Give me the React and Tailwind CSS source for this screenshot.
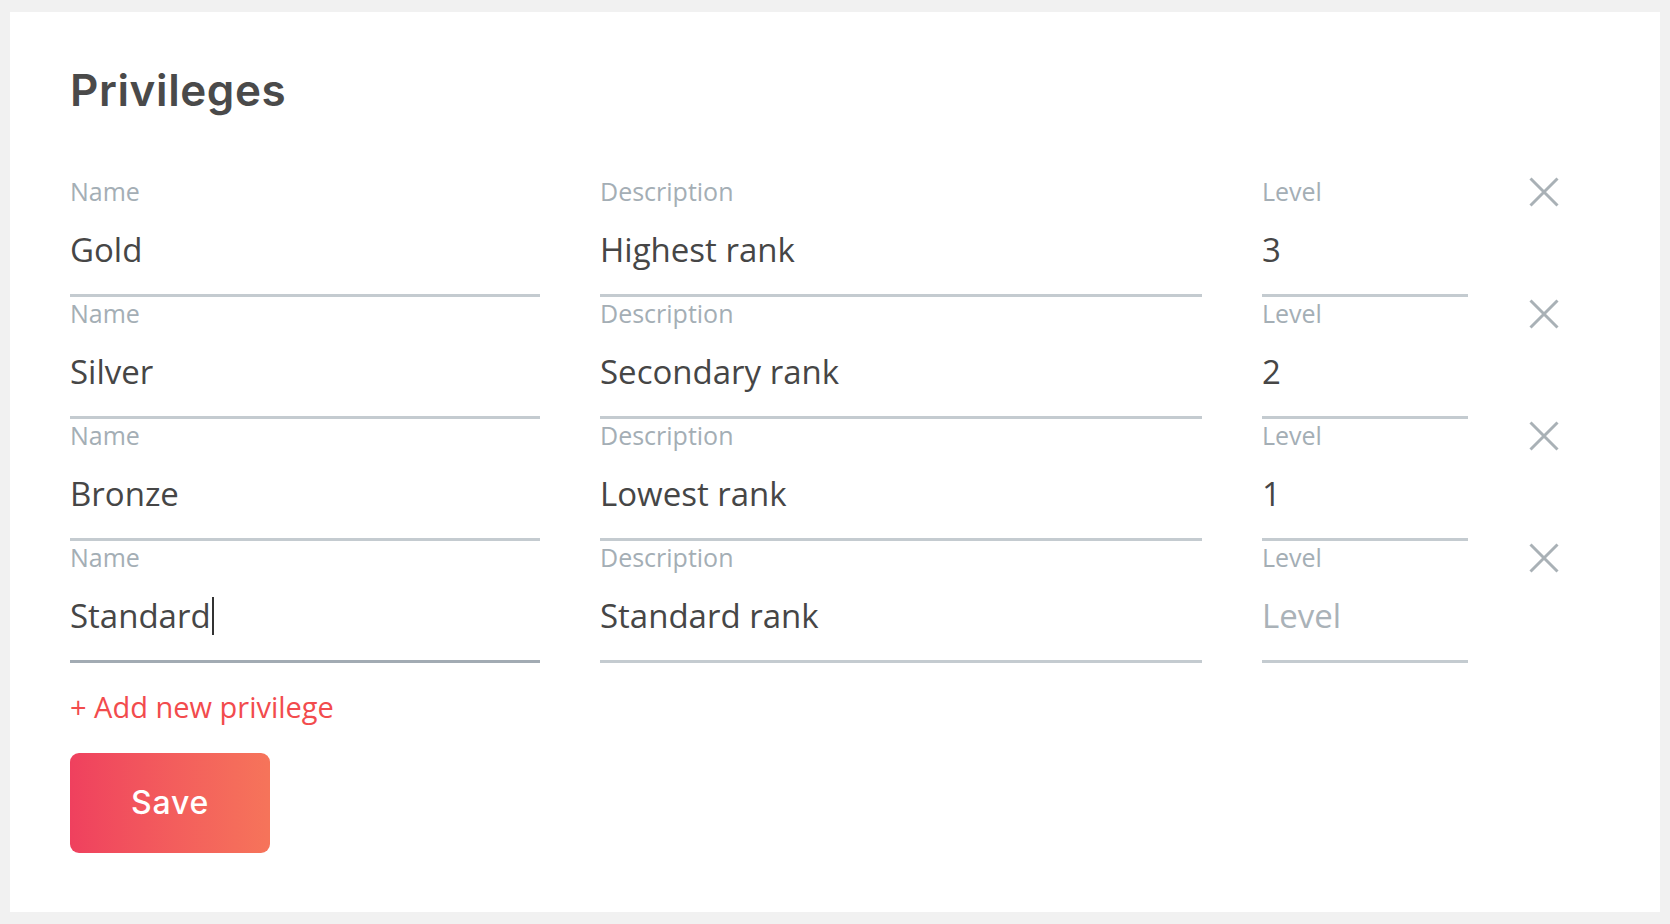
import React from "react";

const rows = [
  { name: "Gold", desc: "Highest rank", level: "3" },
  { name: "Silver", desc: "Secondary rank", level: "2" },
  { name: "Bronze", desc: "Lowest rank", level: "1" },
  { name: "Standard", desc: "Standard rank", level: "", focused: true },
];

function Field({ label, value, placeholder, width, focused, cursor }) {
  return (
    <div className="flex flex-col shrink-0" style={{ width }}>
      <div className="h-[32px] text-[25px] leading-[32px] text-[#a4aeb5]">{label}</div>
      <div className="mt-[23px] h-[40px] text-[33px] leading-[40px] font-medium text-[#464646] flex items-center whitespace-nowrap">
        {value ? (
          <span>{value}</span>
        ) : (
          <span className="text-[#aab2b8] font-normal">{placeholder}</span>
        )}
        {cursor && <span className="inline-block w-[2px] h-[38px] bg-[#333] ml-[1px]" />}
      </div>
      <div className={`mt-[24px] h-[3.5px] ${focused ? "bg-[#a2abb3]" : "bg-[#c4cbd0]"}`} />
    </div>
  );
}

function XIcon() {
  return (
    <svg width="30" height="30" viewBox="0 0 30 30" className="mt-[2px]">
      <path d="M1.5 1.5 L28.5 28.5 M28.5 1.5 L1.5 28.5" stroke="#a9b1b6" strokeWidth="3" fill="none" />
    </svg>
  );
}

export default function App() {
  return (
    <div className="w-[1670px] h-[924px] bg-[#f1f1f1] pt-[12px] pl-[10px]" style={{ fontFamily: '"Open Sans", sans-serif' }}>
      <div className="w-[1650px] h-[900px] bg-white pl-[60px] pt-[53px]">
        <h1
          className="text-[44px] leading-[50px] font-semibold text-[#4a4a4a] tracking-[0.6px]"
          style={{ fontFamily: 'Inter, "Open Sans", sans-serif' }}
        >
          Privileges
        </h1>
        <div className="mt-[60px] flex flex-col">
          {rows.map((r, i) => (
            <div key={i} className="flex h-[122px]">
              <Field label="Name" value={r.name} width={470} focused={r.focused} cursor={r.focused} />
              <div className="w-[60px] shrink-0" />
              <Field label="Description" value={r.desc} width={602} />
              <div className="w-[60px] shrink-0" />
              <Field label="Level" value={r.level} placeholder="Level" width={206} />
              <div className="w-[61px] shrink-0" />
              <XIcon />
            </div>
          ))}
        </div>
        <div className="mt-[26px] h-[36px] text-[29px] leading-[36px] text-[#f24b4d]">+ Add new privilege</div>
        <button
          className="mt-[28px] w-[200px] h-[100px] rounded-[9px] bg-gradient-to-r from-[#ef405e] to-[#f6745a] text-white text-[32px] font-medium tracking-[0.8px] flex items-center justify-center"
          style={{ fontFamily: 'Inter, "Open Sans", sans-serif' }}
        >
          Save
        </button>
      </div>
    </div>
  );
}
